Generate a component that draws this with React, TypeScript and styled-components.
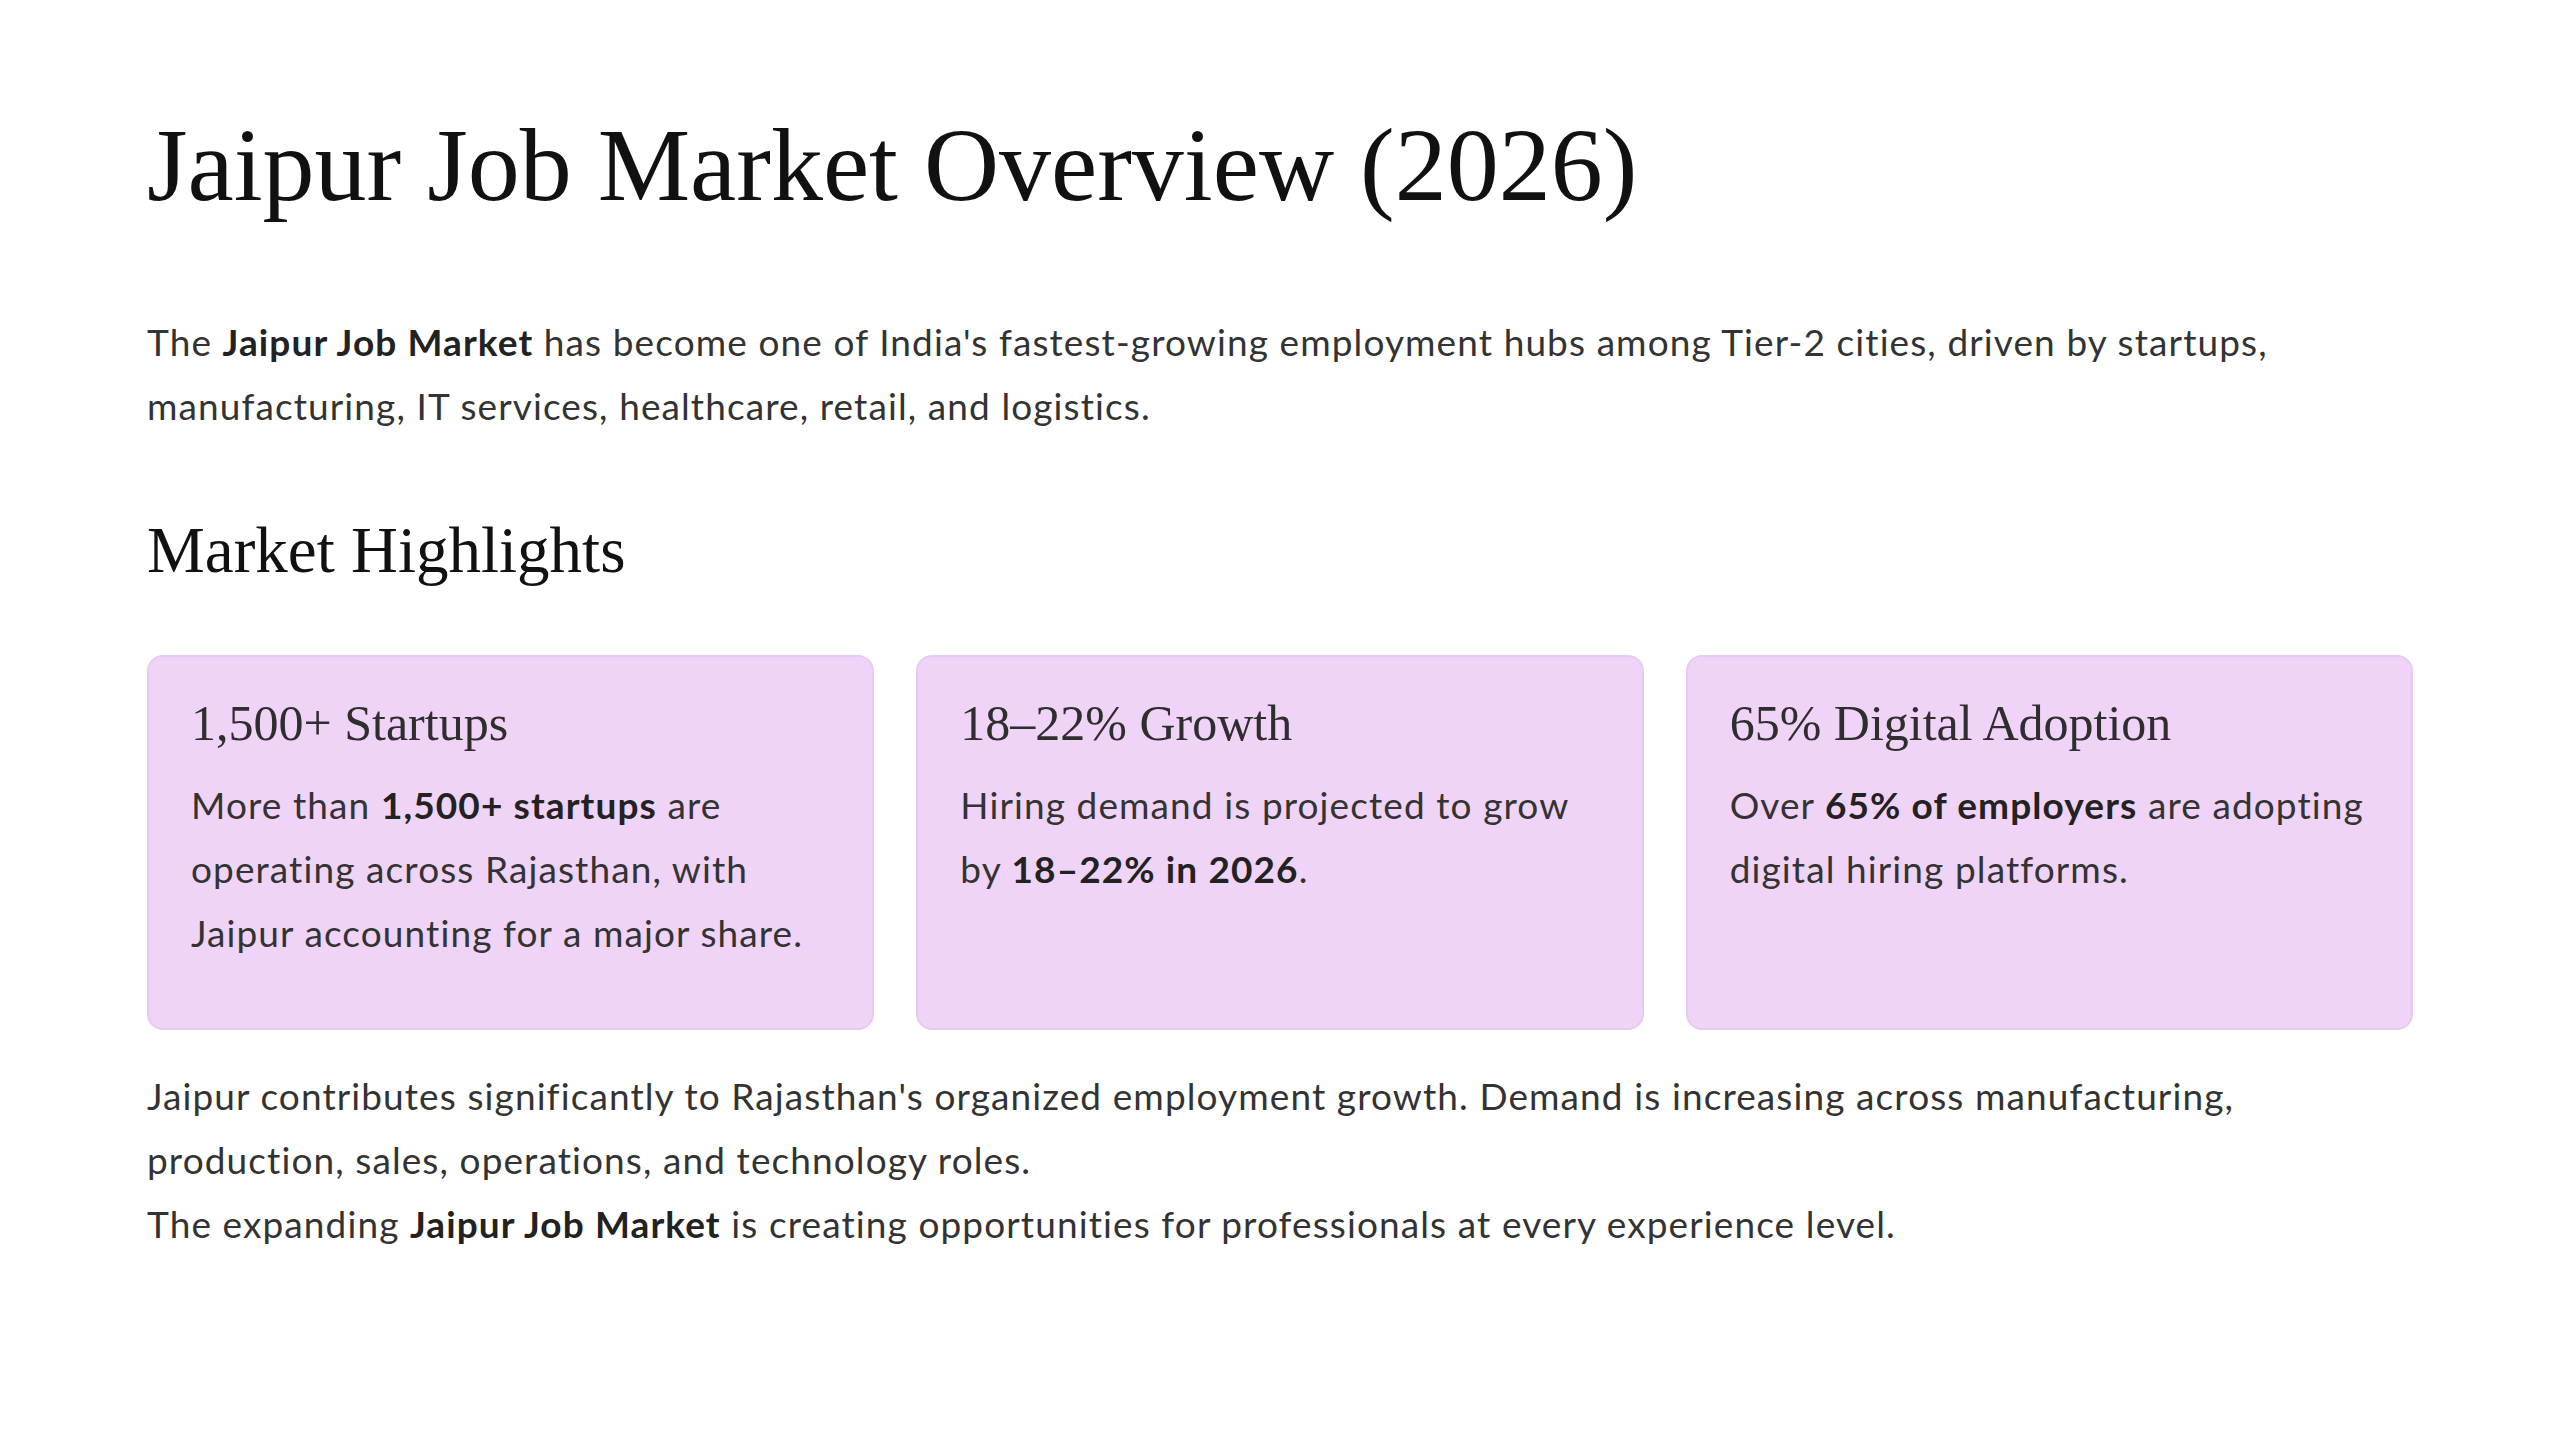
import React from 'react';
import styled, { createGlobalStyle } from 'styled-components';

const GlobalStyle = createGlobalStyle`
  html, body {
    margin: 0;
    padding: 0;
    background: #ffffff;
  }
  body {
    font-family: Lato, "Liberation Sans", sans-serif;
    color: #333333;
  }
`;

const Page = styled.main`
  padding: 100px 147px 120px;
  box-sizing: border-box;
  width: 100%;
`;

const Title = styled.h1`
  font-family: "Liberation Serif", serif;
  font-weight: 400;
  font-size: 104px;
  line-height: 1.25;
  color: #111111;
  margin: 0 0 80px;
`;

const Paragraph = styled.p`
  font-size: 37px;
  letter-spacing: 1.1px;
  line-height: 64px;
  margin: 0;
  color: #333333;

  strong {
    font-weight: 700;
    color: #222222;
  }
`;

const SectionTitle = styled.h2`
  font-family: "Liberation Serif", serif;
  font-weight: 400;
  font-size: 65px;
  line-height: 1.25;
  color: #111111;
  margin: 72px 0 64px;
`;

const CardGrid = styled.section`
  display: grid;
  grid-template-columns: repeat(3, 1fr);
  gap: 42px;
  margin-bottom: 34px;
`;

const Card = styled.article`
  background: #f0d4f7;
  border: 2px solid #e8c9ef;
  border-radius: 16px;
  padding: 36px 42px 63px;
`;

const CardTitle = styled.h3`
  font-family: "Liberation Serif", serif;
  font-weight: 400;
  font-size: 50px;
  line-height: 60px;
  color: #2e2e2e;
  margin: 0 0 20px;
`;

const highlights = [
  {
    title: '1,500+ Startups',
    body: (
      <>
        More than <strong>1,500+ startups</strong> are operating across Rajasthan, with Jaipur
        accounting for a major share.
      </>
    ),
  },
  {
    title: '18–22% Growth',
    body: (
      <>
        Hiring demand is projected to grow by <strong>18–22% in 2026</strong>.
      </>
    ),
  },
  {
    title: '65% Digital Adoption',
    body: (
      <>
        Over <strong>65% of employers</strong> are adopting digital hiring platforms.
      </>
    ),
  },
];

export default function App(): JSX.Element {
  return (
    <>
      <GlobalStyle />
      <Page>
        <Title>Jaipur Job Market Overview (2026)</Title>
        <Paragraph>
          The <strong>Jaipur Job Market</strong> has become one of India's fastest-growing
          employment hubs among Tier-2 cities, driven by startups, manufacturing, IT services,
          healthcare, retail, and logistics.
        </Paragraph>

        <SectionTitle>Market Highlights</SectionTitle>

        <CardGrid>
          {highlights.map(item => (
            <Card key={item.title}>
              <CardTitle>{item.title}</CardTitle>
              <Paragraph>{item.body}</Paragraph>
            </Card>
          ))}
        </CardGrid>

        <Paragraph>
          Jaipur contributes significantly to Rajasthan's organized employment growth. Demand is
          increasing across manufacturing, production, sales, operations, and technology roles.
        </Paragraph>
        <Paragraph>
          The expanding <strong>Jaipur Job Market</strong> is creating opportunities for
          professionals at every experience level.
        </Paragraph>
      </Page>
    </>
  );
}
